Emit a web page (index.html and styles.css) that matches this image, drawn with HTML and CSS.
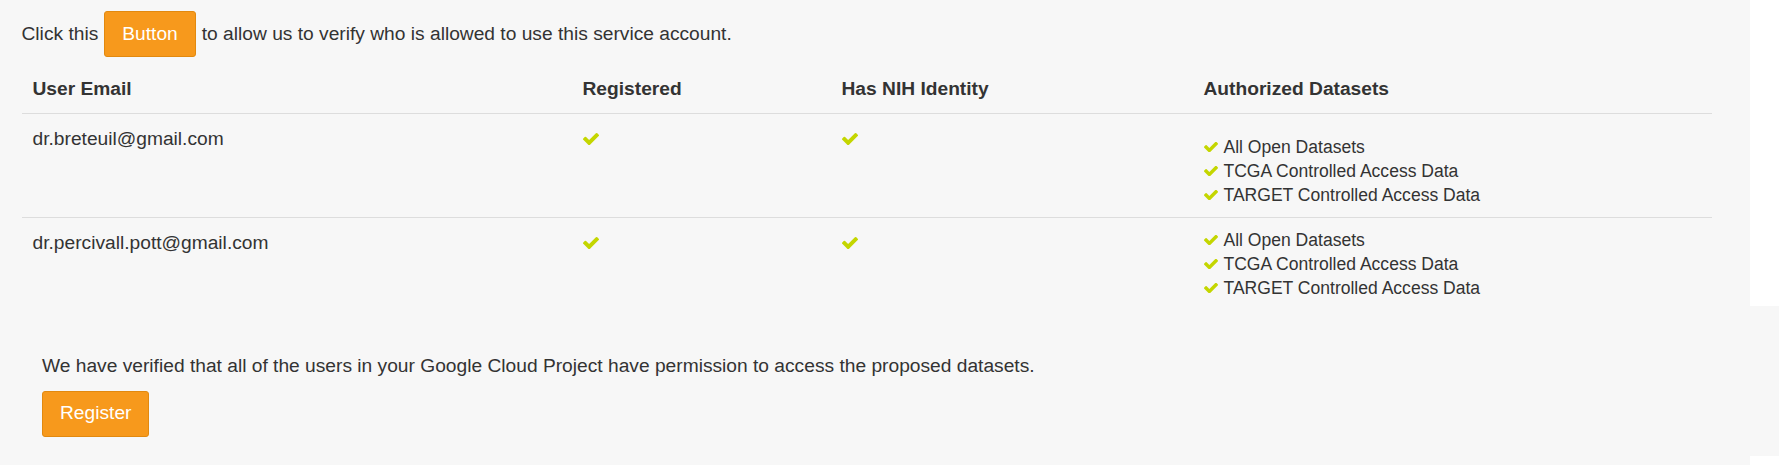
FILE: index.html
```html
<!DOCTYPE html>
<html lang="en">
<head>
<meta charset="utf-8">
<title>Service account verification</title>
<link rel="stylesheet" href="styles.css">
</head>
<body>
<div class="page">
  <section class="panel-top">
    <div class="intro">
      <span>Click this</span>
      <button class="btn" type="button">Button</button>
      <span>to allow us to verify who is allowed to use this service account.</span>
    </div>
    <table class="users">
      <colgroup>
        <col class="c-email"><col class="c-reg"><col class="c-nih"><col class="c-data">
      </colgroup>
      <thead>
        <tr>
          <th>User Email</th>
          <th>Registered</th>
          <th>Has NIH Identity</th>
          <th>Authorized Datasets</th>
        </tr>
      </thead>
      <tbody>
        <tr>
          <td>dr.breteuil@gmail.com</td>
          <td><svg class="check" viewBox="121 402 1550 1024"><path d="M1671 566q0 40-28 68l-724 724-136 136q-28 28-68 28t-68-28l-136-136-362-362q-28-28-28-68t28-68l136-136q28-28 68-28t68 28l294 295 656-657q28-28 68-28t68 28l136 136q28 28 28 68z"/></svg></td>
          <td><svg class="check" viewBox="121 402 1550 1024"><path d="M1671 566q0 40-28 68l-724 724-136 136q-28 28-68 28t-68-28l-136-136-362-362q-28-28-28-68t28-68l136-136q28-28 68-28t68 28l294 295 656-657q28-28 68-28t68 28l136 136q28 28 28 68z"/></svg></td>
          <td class="datasets-cell">
            <ul class="datasets datasets-first">
              <li><svg class="check-sm" viewBox="121 402 1550 1024"><path d="M1671 566q0 40-28 68l-724 724-136 136q-28 28-68 28t-68-28l-136-136-362-362q-28-28-28-68t28-68l136-136q28-28 68-28t68 28l294 295 656-657q28-28 68-28t68 28l136 136q28 28 28 68z"/></svg>All Open Datasets</li>
              <li><svg class="check-sm" viewBox="121 402 1550 1024"><path d="M1671 566q0 40-28 68l-724 724-136 136q-28 28-68 28t-68-28l-136-136-362-362q-28-28-28-68t28-68l136-136q28-28 68-28t68 28l294 295 656-657q28-28 68-28t68 28l136 136q28 28 28 68z"/></svg>TCGA Controlled Access Data</li>
              <li><svg class="check-sm" viewBox="121 402 1550 1024"><path d="M1671 566q0 40-28 68l-724 724-136 136q-28 28-68 28t-68-28l-136-136-362-362q-28-28-28-68t28-68l136-136q28-28 68-28t68 28l294 295 656-657q28-28 68-28t68 28l136 136q28 28 28 68z"/></svg>TARGET Controlled Access Data</li>
            </ul>
          </td>
        </tr>
        <tr>
          <td>dr.percivall.pott@gmail.com</td>
          <td><svg class="check" viewBox="121 402 1550 1024"><path d="M1671 566q0 40-28 68l-724 724-136 136q-28 28-68 28t-68-28l-136-136-362-362q-28-28-28-68t28-68l136-136q28-28 68-28t68 28l294 295 656-657q28-28 68-28t68 28l136 136q28 28 28 68z"/></svg></td>
          <td><svg class="check" viewBox="121 402 1550 1024"><path d="M1671 566q0 40-28 68l-724 724-136 136q-28 28-68 28t-68-28l-136-136-362-362q-28-28-28-68t28-68l136-136q28-28 68-28t68 28l294 295 656-657q28-28 68-28t68 28l136 136q28 28 28 68z"/></svg></td>
          <td class="datasets-cell">
            <ul class="datasets">
              <li><svg class="check-sm" viewBox="121 402 1550 1024"><path d="M1671 566q0 40-28 68l-724 724-136 136q-28 28-68 28t-68-28l-136-136-362-362q-28-28-28-68t28-68l136-136q28-28 68-28t68 28l294 295 656-657q28-28 68-28t68 28l136 136q28 28 28 68z"/></svg>All Open Datasets</li>
              <li><svg class="check-sm" viewBox="121 402 1550 1024"><path d="M1671 566q0 40-28 68l-724 724-136 136q-28 28-68 28t-68-28l-136-136-362-362q-28-28-28-68t28-68l136-136q28-28 68-28t68 28l294 295 656-657q28-28 68-28t68 28l136 136q28 28 28 68z"/></svg>TCGA Controlled Access Data</li>
              <li><svg class="check-sm" viewBox="121 402 1550 1024"><path d="M1671 566q0 40-28 68l-724 724-136 136q-28 28-68 28t-68-28l-136-136-362-362q-28-28-28-68t28-68l136-136q28-28 68-28t68 28l294 295 656-657q28-28 68-28t68 28l136 136q28 28 28 68z"/></svg>TARGET Controlled Access Data</li>
            </ul>
          </td>
        </tr>
      </tbody>
    </table>
  </section>
  <section class="panel-bottom">
    <p class="verified">We have verified that all of the users in your Google Cloud Project have permission to access the proposed datasets.</p>
    <button class="btn btn-register" type="button">Register</button>
  </section>
  <div class="panel-tail"></div>
</div>
</body>
</html>
```

FILE: styles.css
```css
html, body {
  margin: 0;
  padding: 0;
  background: #ffffff;
}

body {
  font-family: "Liberation Sans", Arial, sans-serif;
  font-size: 19.2px;
  line-height: 26.67px;
  color: #333333;
}

.page {
  width: 1750px;
}

.panel-top {
  background: #f7f7f7;
  height: 306px;
  padding: 11px 0 0 21.5px;
  box-sizing: border-box;
}

.intro {
  display: flex;
  align-items: center;
  height: 46px;
  gap: 6px;
}

.btn {
  font-family: "Liberation Sans", Arial, sans-serif;
  font-size: 19.2px;
  line-height: 26.67px;
  color: #ffffff;
  background: #f7991c;
  border: 1px solid #e2890f;
  border-radius: 3px;
  padding: 0 17px;
  height: 46px;
  box-sizing: border-box;
  cursor: pointer;
}

.users {
  margin-top: 7px;
  width: 1690px;
  border-collapse: collapse;
  table-layout: fixed;
}

.c-email { width: 550px; }
.c-reg { width: 259px; }
.c-nih { width: 362px; }
.c-data { width: 519px; }

.users th {
  text-align: left;
  font-weight: bold;
  padding: 12px 11px 10px;
  border-bottom: 1px solid #dddddd;
}

.users td {
  vertical-align: top;
  padding: 12px 11px 10px;
  border-top: 1px solid #dddddd;
}

.users tbody tr:first-child td {
  border-top: none;
}

.users td.datasets-cell {
  padding-top: 10px;
}

.check {
  display: block;
  width: 16px;
  height: 12px;
  margin-top: 7px;
  fill: #c4d600;
}

.datasets {
  list-style: none;
  margin: 0;
  padding: 0;
  font-size: 17.55px;
  line-height: 24px;
}

.datasets-first {
  margin-top: 11px;
}

.datasets li {
  display: flex;
  align-items: center;
  gap: 6px;
}

.check-sm {
  width: 14px;
  height: 10px;
  fill: #c4d600;
  flex: none;
}

.panel-bottom {
  background: #f7f7f7;
  width: 1779px;
  padding: 47px 0 19px 42px;
  box-sizing: border-box;
}

.verified {
  margin: 0 0 11px;
}

.btn-register {
  padding: 0 17px;
}

.panel-tail {
  background: #f7f7f7;
  height: 9px;
}
```
